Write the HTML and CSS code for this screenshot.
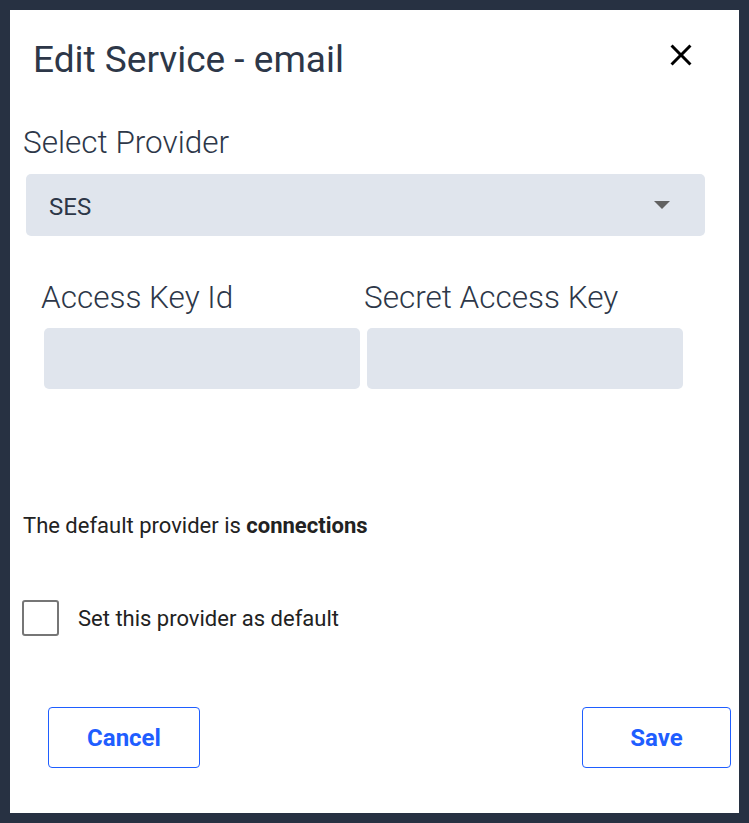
FILE: index.html
```html
<!DOCTYPE html>
<html>
<head>
<meta charset="utf-8">
<link rel="stylesheet" href="styles.css">
</head>
<body>
<div class="panel">
  <div class="header">
    <h1 class="title">Edit Service - email</h1>
    <button class="close" aria-label="Close">
      <svg width="36" height="36" viewBox="0 0 24 24"><path d="M19 6.41 17.59 5 12 10.59 6.41 5 5 6.41 10.59 12 5 17.59 6.41 19 12 13.41 17.59 19 19 17.59 13.41 12z" fill="#000"/></svg>
    </button>
  </div>
  <div class="section">
    <div class="label">Select Provider</div>
    <div class="select">
      <span class="select-value">SES</span>
      <span class="arrow"></span>
    </div>
  </div>
  <div class="fields">
    <div class="field">
      <div class="label">Access Key Id</div>
      <div class="input"></div>
    </div>
    <div class="field">
      <div class="label">Secret Access Key</div>
      <div class="input"></div>
    </div>
  </div>
  <p class="note">The default provider is <b>connections</b></p>
  <label class="check">
    <span class="box"></span>
    <span>Set this provider as default</span>
  </label>
  <div class="actions">
    <button class="btn">Cancel</button>
    <button class="btn btn-save">Save</button>
  </div>
</div>
</body>
</html>
```

FILE: styles.css
```css
html, body {
  margin: 0;
  padding: 0;
}
body {
  background: #273142;
  font-family: Roboto, "Noto Sans", sans-serif;
  color: #2d3748;
  padding: 10px;
  box-sizing: border-box;
  height: 823px;
}
.panel {
  background: #fff;
  height: 803px;
  display: flex;
  flex-direction: column;
}
.header {
  display: flex;
  align-items: flex-start;
  justify-content: space-between;
  padding: 29px 40px 0 23px;
  height: 42px;
}
.title {
  margin: 0;
  font-size: 37px;
  font-weight: 400;
  line-height: 42px;
  color: #2d3748;
}
.close {
  border: 0;
  background: none;
  padding: 0;
  margin-top: -2.5px;
  width: 36px;
  height: 36px;
  display: flex;
}
.section {
  padding: 44px 0 0 13px;
}
.label {
  font-size: 31.5px;
  font-weight: 300;
  line-height: 36px;
  color: #2d3748;
}
.select {
  margin: 13px 0 0 3px;
  width: 679px;
  height: 62px;
  background: #e0e5ed;
  border-radius: 5px;
  display: flex;
  align-items: center;
  justify-content: space-between;
  padding: 0 35px 0 23px;
  box-sizing: border-box;
}
.select-value {
  font-size: 24px;
  color: #2d3748;
  padding-top: 4px;
}
.arrow {
  width: 0;
  height: 0;
  border-left: 8.5px solid transparent;
  border-right: 8.5px solid transparent;
  border-top: 8px solid #616161;
}
.fields {
  display: flex;
  gap: 7px;
  padding: 44px 0 0 34px;
}
.field {
  width: 316px;
}
.field .label {
  margin-left: -3px;
}
.input {
  margin-top: 12px;
  height: 61px;
  background: #e0e5ed;
  border-radius: 5px;
}
.note {
  margin: 124px 0 0 13px;
  font-size: 22px;
  line-height: 26px;
  color: #222;
}
.note b {
  font-weight: 700;
}
.check {
  display: flex;
  align-items: center;
  margin: 61px 0 0 12px;
  font-size: 22px;
  color: #222;
  gap: 19px;
}
.box {
  width: 37px;
  height: 36px;
  border: 2px solid #767676;
  border-radius: 3px;
  box-sizing: border-box;
}
.actions {
  display: flex;
  justify-content: space-between;
  padding: 71px 8px 0 38px;
}
.btn {
  width: 152px;
  height: 61px;
  border: 1px solid #1f5eff;
  border-radius: 4px;
  background: #fff;
  color: #1f5eff;
  font-family: Roboto, sans-serif;
  font-weight: 700;
  font-size: 24px;
}
.btn-save {
  width: 149px;
}
```
